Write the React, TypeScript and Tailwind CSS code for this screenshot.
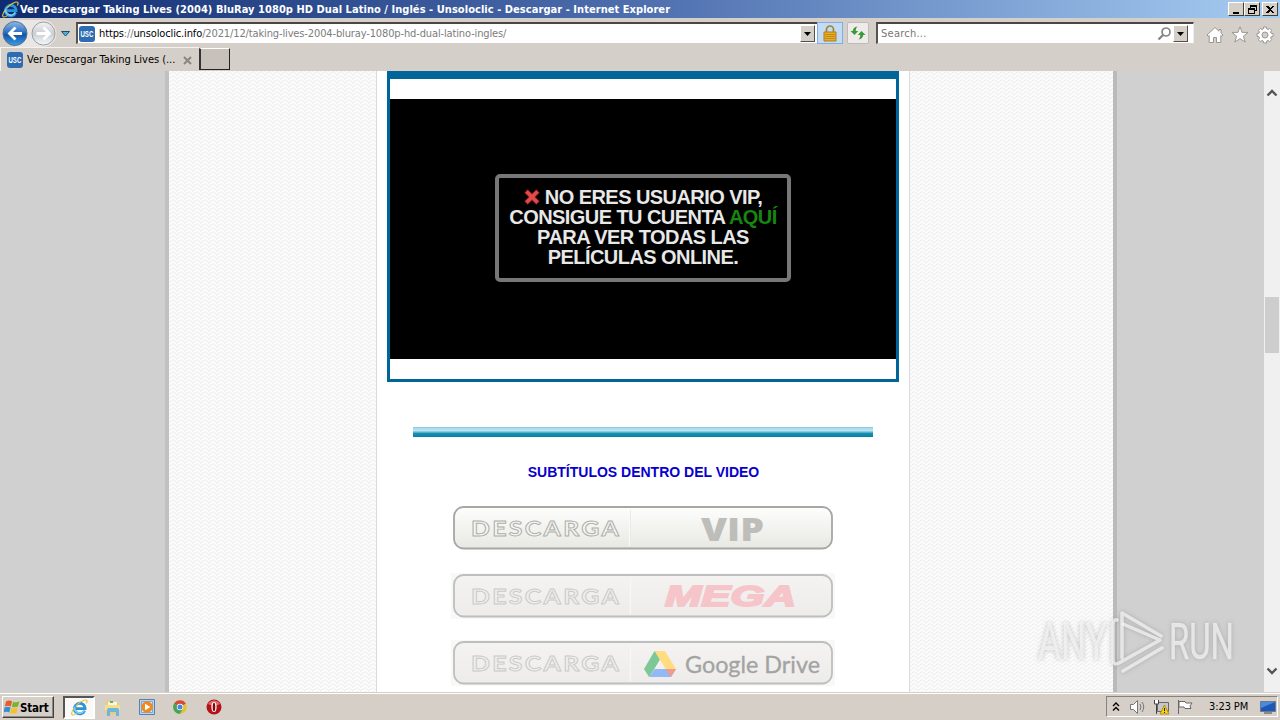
import { ReactNode } from "react";

const UI = "font-['DejaVu_Sans_Condensed','DejaVu_Sans',sans-serif]";

export default function App() {
  return (
    <div className="relative w-[1280px] h-[720px] overflow-hidden flex flex-col bg-[#d5cfc9] font-['Liberation_Sans',sans-serif]">
      <TitleBar />
      <AddressRow />
      <TabRow />
      <div className="h-[621px] flex overflow-hidden">
        <Page />
        <ScrollBar />
      </div>
      <Taskbar />
      <Watermark />
    </div>
  );
}

function IeLogo({ size }: { size: number }) {
  return (
    <svg width={size} height={size} viewBox="0 0 16 16" fill="none" className="shrink-0">
      <path d="M12.800 11A5 5 0 1 1 13.200 9H4.500" stroke="#2b93d6" strokeWidth="2.700" />
      <path d="M12.600 10.800A4.900 4.900 0 0 1 3.600 7.200" stroke="#7ad2f8" strokeWidth="1.400" />
      <path d="M4.500 6.700C7 3.400 13.800-.4 15 1.500c.4.8 0 1.800-.6 2.800M2.900 8.700C.4 11.900.2 14.200 1.200 14.900c.9.5 2.600-.2 4.200-1.400" stroke="#e6c04b" strokeWidth="1.100" />
    </svg>
  );
}

function TitleBar() {
  return (
    <div className="h-[18px] shrink-0 flex items-center pl-[2px] pr-[2px] bg-linear-to-r from-[#102c70] via-[#4e6eae] to-[#a8cdf2]">
      <IeLogo size={17} />
      <span className="ml-px text-[11px] leading-[17px] font-bold text-white whitespace-nowrap tracking-[0.05px] font-['DejaVu_Sans_Condensed','DejaVu_Sans',sans-serif]">
        Ver Descargar Taking Lives (2004) BluRay 1080p HD Dual Latino / Inglés - Unsoloclic - Descargar - Internet Explorer
      </span>
      <div className="ml-auto flex">
        <WinButton>
          <path d="M4 9h6v2H4z" />
        </WinButton>
        <WinButton>
          <path d="M5 2h7v6h-2V7h1V4H6v1H5zM3 5h7v6H3zm1 2v3h5V7z" fillRule="evenodd" />
        </WinButton>
        <div className="w-[2px]" />
        <WinButton>
          <path d="M3 3h2l2 2 2-2h2L8 6.500l3 3.500H9L7 8l-2 2H3l3-3.500z" />
        </WinButton>
      </div>
    </div>
  );
}

function WinButton({ children }: { children: ReactNode }) {
  return (
    <div className="w-4 h-[14px] bg-[#d4d0c8] border border-t-white border-l-white border-r-[#404040] border-b-[#404040]">
      <svg width="14" height="12" viewBox="0 0 14 12" fill="#000" shapeRendering="crispEdges">
        {children}
      </svg>
    </div>
  );
}

function Favicon() {
  return (
    <svg width="16" height="16" viewBox="0 0 16 16" className="shrink-0">
      <rect width="16" height="16" rx="3" fill="#2d6cb3" />
      <text transform="translate(1.4 11.4) scale(.68 1)" fontFamily="Liberation Sans" fontWeight="bold" fontSize="9" fill="#fff">
        USC
      </text>
    </svg>
  );
}

function DropButton() {
  return (
    <div className="w-[15px] h-[17px] shrink-0 bg-[#d4d0c8] border border-t-white border-l-white border-r-[#505050] border-b-[#505050] flex items-center justify-center">
      <svg width="7" height="4" viewBox="0 0 7 4">
        <path d="M0 0h7L3.500 4z" />
      </svg>
    </div>
  );
}

function AddressRow() {
  return (
    <div className="h-[29px] shrink-0 flex items-start">
      <svg width="76" height="29" viewBox="0 0 76 29" className="shrink-0">
        <defs>
          <linearGradient id="back" x2="0" y2="1">
            <stop offset="0" stopColor="#8dbbe8" />
            <stop offset=".45" stopColor="#2f70c1" />
            <stop offset=".55" stopColor="#1553a8" />
            <stop offset="1" stopColor="#39a0e8" />
          </linearGradient>
          <linearGradient id="fwd" x2="0" y2="1">
            <stop offset="0" stopColor="#f4f4f4" />
            <stop offset=".5" stopColor="#c9ced4" />
            <stop offset="1" stopColor="#f6f8fa" />
          </linearGradient>
        </defs>
        <path d="M15 2h28a13.500 13.500 0 0 1 0 27H15z" fill="#e9e6e3" />
        <circle cx="15" cy="15.500" r="12" fill="url(#back)" stroke="#56708f" />
        <circle cx="43.500" cy="15.500" r="11.500" fill="url(#fwd)" stroke="#9b9fa4" />
        <path d="M22 15.500H10M15.500 9.500l-6 6 6 6" fill="none" stroke="#fff" strokeWidth="2.800" />
        <path d="M36.500 15.500h12M43.500 9.500l6 6-6 6" fill="none" stroke="#fff" strokeWidth="2.800" />
        <path d="M61.500 13.500h8L65.500 18z" fill="#4db4d8" stroke="#1c4a74" />
      </svg>
      <div className="mt-1 w-[741px] h-[22px] shrink-0 bg-white border-t-2 border-l-2 border-t-[#4c4543] border-l-[#5a5350] border-b border-b-[#d8d0c8] flex items-center pl-px pr-[2px]">
        <Favicon />
        <span className={`${UI} ml-[4px] mt-[2px] text-[11px] text-[#7c7c7c] whitespace-nowrap tracking-[-0.13px]`}>
          <span className="text-black">https</span>://<span className="text-black">unsoloclic.info</span>
          /2021/12/taking-lives-2004-bluray-1080p-hd-dual-latino-ingles/
        </span>
        <div className="ml-auto">
          <DropButton />
        </div>
      </div>
      <div className="mt-1 w-[26px] h-[22px] shrink-0 bg-[#c4dbf6] border border-[#80ade2] flex items-center justify-center">
        <svg width="14" height="17" viewBox="0 0 14 17">
          <path d="M3.500 8V4.500a3.500 3.500 0 0 1 7 0V8" fill="none" stroke="#a08432" strokeWidth="1.700" />
          <path d="M1 7h12v9H1z" fill="#e9ad23" stroke="#b17c17" />
          <path d="M2 9.500h10M2 11.500h10M2 13.500h10" stroke="#c18b19" />
        </svg>
      </div>
      <div className="mt-1 ml-1 w-[22px] h-[22px] shrink-0 bg-[#eeebea] border border-[#c0bbb6] rounded-[2px] flex items-center justify-center">
        <svg width="16" height="14" viewBox="0 0 16 14" fill="#399a37">
          <path d="M4.500 9L.5 5h2.300C3 2.500 4.500 1 7.500.5 6 2 5.700 3.300 5.800 5h2.400z" />
          <path d="M11.500 5l4 4h-2.300c-.2 2.500-1.700 4-4.700 4.500 1.500-1.500 1.800-2.800 1.700-4.500H7.800z" />
        </svg>
      </div>
      <div className="mt-1 ml-[7px] w-[318px] h-[22px] shrink-0 bg-white border-t-2 border-l-2 border-t-[#4c4543] border-l-[#5a5350] border-b border-b-[#d8d0c8] border-r border-r-[#eee] flex items-center pl-[3px] pr-[5px]">
        <span className={`${UI} mt-[2px] text-[11px] text-[#777] tracking-[0.25px]`}>Search...</span>
        <svg width="15" height="14" viewBox="0 0 15 14" fill="none" stroke="#858585" className="ml-auto mr-px">
          <circle cx="9" cy="5" r="4" strokeWidth="1.700" />
          <path d="M6 8l-4.500 4.500" strokeWidth="2.300" />
        </svg>
        <DropButton />
      </div>
      <div className="mt-[8px] ml-[12px] flex gap-[7px]">
        <svg width="18" height="18" viewBox="0 0 18 18" fill="#fff" stroke="#9a9693">
          <path d="M9 1.500L1 9l1.300 1.300.9-.8v7h4.300v-5h3v5h4.300v-7l.9.800L17 9l-2-1.900V3.500h-2v1.700z" />
        </svg>
        <svg width="18" height="18" viewBox="0 0 18 18" fill="#fff" stroke="#9a9693">
          <path d="M9 .8l2.100 5.600h6l-4.700 3.700 1.800 6L9 12.700l-5.200 3.400 1.800-6L.9 6.400h6z" />
        </svg>
        <svg width="18" height="18" viewBox="0 0 18 18" fill="#fff" stroke="#9a9693">
          <path
            fillRule="evenodd"
            d="M7.600 1h2.800l.4 2 1.200.5L13.800 2.400l1.900 1.900-1.100 1.700.5 1.200 2 .4v2.800l-2 .4-.5 1.200 1.100 1.700-1.900 1.900-1.800-1.100-1.200.5-.4 2H7.600l-.4-2-1.200-.5-1.700 1.100-1.900-1.900L3.500 12 3 10.800l-2-.4V7.600l2-.4L3.500 6 2.400 4.300l1.900-1.900L6 3.500 7.200 3zM9 6a3 3 0 1 0 0 6 3 3 0 0 0 0-6z"
          />
        </svg>
      </div>
    </div>
  );
}

function TabRow() {
  return (
    <div className="h-6 shrink-0 flex">
      <div className="w-[199px] h-6 border-t border-l border-t-[#f5f2ef] border-l-[#f5f2ef] flex items-center pl-[6px] pr-[7px]">
        <Favicon />
        <span className={`${UI} ml-[4px] mt-[2px] text-[11px] text-black whitespace-nowrap tracking-[-0.03px]`}>
          Ver Descargar Taking Lives (...
        </span>
        <svg width="9" height="9" viewBox="0 0 9 9" stroke="#8a8683" strokeWidth="2" className="ml-auto mt-px">
          <path d="M1 1l7 7M8 1L1 8" />
        </svg>
      </div>
      <div className="mt-px w-[31px] h-[22px] bg-[#c8c0bb] border-l-2 border-l-[#333] border-r border-b border-[#222] border-t border-t-white" />
    </div>
  );
}

function Hatch({ id, width }: { id: string; width: number }) {
  return (
    <svg width={width} height="621" className="shrink-0">
      <pattern id={id} width="8" height="4" patternUnits="userSpaceOnUse">
        <path d="M0 0h8v4H0z" fill="#fbfbfb" />
        <path d="M-1 4.500l5-4 5 4M-1 .5l1 0M3-3.500l5 4" fill="none" stroke="#ececec" />
      </pattern>
      <rect width={width} height="621" fill={`url(#${id})`} />
    </svg>
  );
}

function Page() {
  return (
    <div className="w-[1264px] flex bg-[#d0d0d0]">
      <div className="w-[165px] shrink-0" />
      <div className="w-1 shrink-0 bg-[#c0c0c0]" />
      <Hatch id="hatch-left" width={207} />
      <div className="w-[534px] shrink-0 border-x border-[#d8dbde] bg-white flex flex-col items-center">
        <div className="w-[512px] h-[311px] shrink-0 border-[3px] border-t-8 border-[#006699] py-5">
          <div className="h-[260px] bg-black flex items-center justify-center">
            <VipNotice />
          </div>
        </div>
        <div className="mt-[45px] w-[460px] h-[10px] shrink-0 bg-[linear-gradient(#8bbfcf_0,#a9dcec_15%,#b9e4f2_35%,#72bfdb_50%,#1890b0_65%,#08819f_100%)]" />
        <div className="mt-[27px] ml-px h-4 leading-4 text-[14px] font-bold text-[#0600cf] whitespace-nowrap">
          SUBTÍTULOS DENTRO DEL VIDEO
        </div>
        <div className="mt-[25px] flex flex-col gap-[21.5px]">
          <Download>
            <text x="250" y="35" textLength="63" lengthAdjust="spacingAndGlyphs" fontFamily="Open Sans" fontWeight="800" fontSize="31" fill="#bdbeba">
              VIP
            </text>
          </Download>
          <Download dim>
            <text x="214" y="32" textLength="131" lengthAdjust="spacingAndGlyphs" fontFamily="Liberation Sans" fontWeight="bold" fontStyle="italic" fontSize="29" fill="#f5c5c9" stroke="#f5c5c9" strokeWidth="1.800">
              MEGA
            </text>
          </Download>
          <Download dim>
            <g transform="translate(193 10)">
              <path d="M10.500 0h10.500L10.500 18 5 26 0 18z" fill="#7cc997" />
              <path d="M10.500 0H21l11 18H21.500z" fill="#ffdc80" />
              <path d="M11 18h21l-5 8H5z" fill="#92b8f5" />
              <path d="M21.500 18H32l-5 8z" fill="#f19b8c" />
              <path d="M16 9l5.500 9H10.500z" fill="#f2f1f0" />
            </g>
            <text x="234" y="32" textLength="135" lengthAdjust="spacingAndGlyphs" fontFamily="Lato" fontSize="23" fill="#a3a3a3" stroke="#a3a3a3" strokeWidth=".3">
              Google Drive
            </text>
          </Download>
        </div>
      </div>
      <Hatch id="hatch-right" width={203} />
      <div className="w-1 shrink-0 bg-[#bababa]" />
    </div>
  );
}

function VipNotice() {
  return (
    <div className="w-[296px] h-[108px] mt-[-3px] border-4 border-[#777] rounded-[5px] pt-[9px] text-center text-[20px] leading-5 font-bold text-[#e8e8e8] whitespace-nowrap tracking-[-0.56px]">
      <div className="h-5">
        <svg width="16" height="16" viewBox="0 0 16 16" className="inline-block align-[-1px] mr-[5px]">
          <path d="M2 2l12 12M14 2L2 14" stroke="#8b1d20" strokeWidth="5" />
          <path d="M2.500 2.500l11 11M13.500 2.500l-11 11" stroke="#e34b4b" strokeWidth="3.200" />
        </svg>
        NO ERES USUARIO VIP,
      </div>
      <div>
        CONSIGUE TU CUENTA <span className="text-[#17850f]">AQUÍ</span>
      </div>
      <div>PARA VER TODAS LAS</div>
      <div>PELÍCULAS ONLINE.</div>
    </div>
  );
}

function Download({ dim, children }: { dim?: boolean; children: ReactNode }) {
  const edge = dim ? "#bdbfbc" : "#a6a7a4";
  return (
    <div className={dim ? "h-[46px] w-[384px] shrink-0 bg-[#f9f8f8] pt-px" : "h-[46px] w-[384px] shrink-0 pt-px"}>
      <svg width="384" height="44" viewBox="0 0 384 44">
        <defs>
          <linearGradient id={dim ? "face-dim" : "face"} x2="0" y2="1">
            <stop offset="0" stopColor={dim ? "#f4f3f2" : "#fdfdfc"} />
            <stop offset="1" stopColor={dim ? "#edecea" : "#e8e8e3"} />
          </linearGradient>
        </defs>
        <rect x="3" y="1" width="378" height="41.500" rx="9.500" fill={dim ? "url(#face-dim)" : "url(#face)"} stroke={edge} strokeWidth="1.800" />
        <path d="M179.500 4v36" stroke={dim ? "#f7f7f6" : "#e9e9e6"} />
        <path d="M178.500 4v36" stroke={dim ? "#f2f1f0" : "#fafafa"} />
        <text x="20" y="30" textLength="150" lengthAdjust="spacingAndGlyphs" letterSpacing="2" fontFamily="Lato" fontWeight="bold" fontSize="21.500" fill={dim ? "#efeeed" : "#f5f5f2"} stroke={dim ? "#cbcac8" : "#aeaeaa"} strokeWidth=".9">
          DESCARGA
        </text>
        {children}
      </svg>
    </div>
  );
}

function ScrollBar() {
  return (
    <div className="w-4 shrink-0 bg-[#f0f0f0] flex flex-col items-center">
      <svg width="12" height="8" viewBox="0 0 12 8" fill="none" stroke="#555" strokeWidth="2.400" className="mt-[18px]">
        <path d="M1.500 6.500L6 2l4.500 4.500" />
      </svg>
      <div className="mt-[200px] w-[14px] h-[56px] bg-[#cdcdcd]" />
      <svg width="12" height="8" viewBox="0 0 12 8" fill="none" stroke="#555" strokeWidth="2.400" className="mt-auto mb-[17px]">
        <path d="M1.500 1.500L6 6l4.500-4.500" />
      </svg>
    </div>
  );
}

function Taskbar() {
  return (
    <div className="h-7 shrink-0 border-t border-t-[#d4d0c8] bg-[#d6cfc8] shadow-[inset_0_1px_0_#fff] flex items-start pt-[3px]">
      <div className="ml-[2px] w-[52px] h-[22px] border border-t-white border-l-white border-r-[#404040] border-b-[#404040] flex items-center pl-px shadow-[inset_-1px_-1px_0_#908a85]">
        <svg width="16" height="16" viewBox="0 0 16 16" className="shrink-0">
          <path d="M2 2.500Q5 .5 8 2.300L6.800 7.500Q4 6 .8 7.500z" fill="#e85a26" />
          <path d="M9 2.700Q12 4 15.500 2.300L14 7.600Q11 9 7.800 7.800z" fill="#7bb52e" />
          <path d="M.6 8.500Q4 7 6.600 8.500L5.300 13.500Q3 12-.5 13.500z" fill="#338fd2" />
          <path d="M7.600 9Q11 10 13.800 8.600L12.500 14Q9 15 6.300 14z" fill="#f8bf29" />
        </svg>
        <span className="mt-px text-[11.5px] leading-[14px] font-bold text-black tracking-[-0.2px] font-['DejaVu_Sans_Condensed','DejaVu_Sans',sans-serif]">Start</span>
      </div>
      <div className="ml-[9px] w-8 h-[23px] bg-[#faf9f8] border-2 border-t-[#555] border-l-[#555] border-r-white border-b-white flex items-center justify-center">
        <IeLogo size={17} />
      </div>
      <svg width="18" height="18" viewBox="0 0 18 18" className="ml-[9px] mt-[3px]">
        <path d="M2 2h5l1 2h7v11H2z" fill="#e8cf72" />
        <path d="M4 3h9v6H4z" fill="#fbf7d8" />
        <path d="M1 6h15v5H1z" fill="#f2df93" />
        <path d="M3 17v-6q0-2 2-2h8q2 0 2 2v6h-3v-4H6v4z" fill="#6fb6da" />
        <path d="M6 2h3v2H6z" fill="#62b35b" />
      </svg>
      <svg width="17" height="17" viewBox="0 0 17 17" className="ml-[17px] mt-[3px]">
        <path d="M.5.5h15v15H.5z" fill="#b6d5f2" stroke="#5580b4" />
        <path d="M2.500 2.500h11v11h-11z" fill="#d8e8f6" stroke="#7ba6d6" />
        <circle cx="8" cy="8" r="5.800" fill="#f08a1b" />
        <path d="M6 4.700L11.500 8 6 11.300z" fill="#fff" />
      </svg>
      <svg width="14" height="14" viewBox="0 0 14 14" className="ml-[17px] mt-1">
        <circle cx="7" cy="7" r="6.800" fill="#e6c230" />
        <path d="M7 7L1.100 3.600A6.800 6.800 0 0 1 12.900 3.600z" fill="#d84938" />
        <path d="M7 7L1.100 3.600A6.800 6.800 0 0 0 7 13.800L10 8.500z" fill="#45a455" />
        <circle cx="7" cy="7" r="3.200" fill="#fff" />
        <circle cx="7" cy="7" r="2.500" fill="#4387e8" />
      </svg>
      <svg width="16" height="16" viewBox="0 0 16 16" className="ml-[19px] mt-[3px]">
        <circle cx="8" cy="8" r="7.500" fill="#b51217" />
        <path d="M2 5a7 7 0 0 1 12 0q-6 3-12 0z" fill="#dc6a68" />
        <ellipse cx="8" cy="8" rx="2.600" ry="5" fill="#fff" />
        <ellipse cx="8" cy="8" rx="1.300" ry="4.300" fill="#7f090d" />
      </svg>
      <div className="ml-auto mr-[2px] w-[172px] h-[21px] border border-t-[#88827d] border-l-[#88827d] border-r-white border-b-white flex items-center">
        <svg width="10" height="12" viewBox="0 0 10 12" fill="none" stroke="#000" strokeWidth="1.400" className="ml-[4px]">
          <path d="M2 5l3-3 3 3M2 9.500l3-3 3 3" />
        </svg>
        <svg width="17" height="16" viewBox="0 0 17 16" fill="none" stroke="#777" className="ml-[8px]">
          <path d="M1.500 5.500h3l4-4v13l-4-4h-3z" fill="#fff" />
          <path d="M11 5q2 3 0 6M13 3q3.500 5 0 10" />
        </svg>
        <svg width="17" height="16" viewBox="0 0 17 16" className="ml-[7px]">
          <path d="M4.500 3.500h11v9h-11z" fill="#c5c8cb" stroke="#666" />
          <path d="M1.500 1v4h4V1M3.500 5v10" fill="#fff" stroke="#444" />
          <path d="M11.500 6l4.500 9H7z" fill="#f7cf20" stroke="#b58f12" />
          <path d="M11.500 9v3M11.500 13v1" stroke="#222" />
        </svg>
        <svg width="17" height="16" viewBox="0 0 17 16" fill="#fff" stroke="#666" className="ml-[7px]">
          <path d="M1.500 1v14M2 2.500h6l1 1.500h6l-2 3 1 2.500H8L7 8H2z" />
        </svg>
        <span className={`${UI} ml-[15px] mt-[2px] text-[11px] text-black whitespace-nowrap tracking-[-0.1px]`}>3:23 PM</span>
        <svg width="16" height="14" viewBox="0 0 16 14" className="ml-auto mr-px">
          <path d="M.5 1.500h15v10H.5z" fill="#1d58b8" stroke="#6c7a8c" />
          <path d="M1 2h14L1 8z" fill="#4c8bdb" />
          <path d="M4 13h8" stroke="#444" />
        </svg>
      </div>
    </div>
  );
}

// translucent logo floating over the page corner
function Watermark() {
  return (
    <svg width="250" height="76" viewBox="0 0 250 76" className="absolute left-[1030px] top-[605px] drop-shadow-[0_0_2px_rgba(110,110,110,0.5)]">
      <g fontFamily="Roboto" fontWeight="400" fontSize="50" fill="#f4f4f4" fillOpacity=".75" stroke="#f4f4f4" strokeOpacity=".4" strokeWidth=".6">
        <text x="8" y="54" textLength="69" lengthAdjust="spacingAndGlyphs">
          ANY
        </text>
        <text x="139" y="54" textLength="65" lengthAdjust="spacingAndGlyphs">
          RUN
        </text>
      </g>
      <g fill="none" stroke="#f4f4f4" strokeOpacity=".75" strokeWidth="3.500" strokeLinejoin="round" strokeLinecap="round">
        <path d="M87 15q-4-1-4 5v34q0 7 6 4l41-23L93 19" />
        <path d="M131 31L92 8v45M93 66l39-23" />
      </g>
    </svg>
  );
}
